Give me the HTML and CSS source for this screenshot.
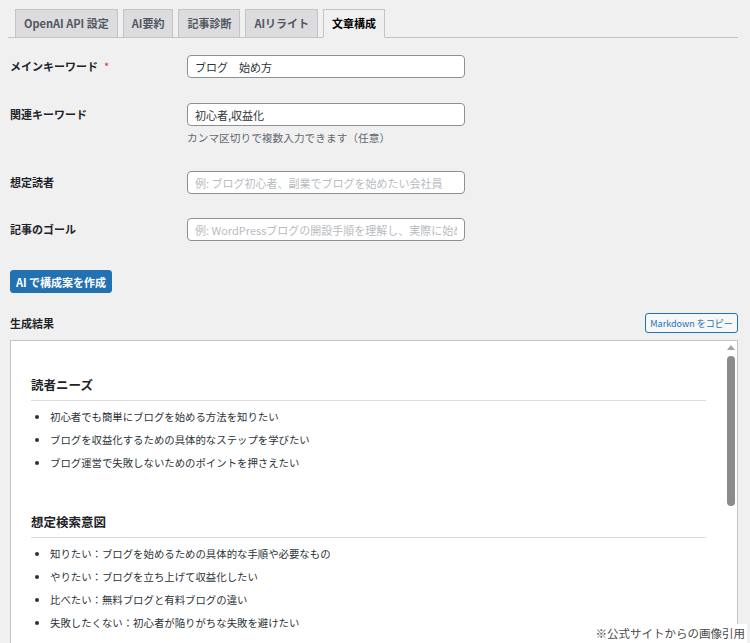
FILE: index.html
```html
<!DOCTYPE html>
<html lang="ja">
<head>
<meta charset="utf-8">
<title>文章構成</title>
<link rel="stylesheet" href="styles.css">
</head>
<body>
<div class="page">
  <nav class="tabs">
    <a class="tab">OpenAI API 設定</a>
    <a class="tab">AI要約</a>
    <a class="tab">記事診断</a>
    <a class="tab">AIリライト</a>
    <a class="tab active">文章構成</a>
  </nav>

  <form class="form">
    <div class="row row-first">
      <label class="label">メインキーワード<span class="req">*</span></label>
      <div class="field"><input class="input" type="text" value="ブログ　始め方"></div>
    </div>
    <div class="row">
      <label class="label">関連キーワード</label>
      <div class="field">
        <input class="input" type="text" value="初心者,収益化">
        <p class="desc">カンマ区切りで複数入力できます（任意）</p>
      </div>
    </div>
    <div class="row">
      <label class="label">想定読者</label>
      <div class="field"><input class="input" type="text" placeholder="例: ブログ初心者、副業でブログを始めたい会社員"></div>
    </div>
    <div class="row row-last">
      <label class="label">記事のゴール</label>
      <div class="field"><input class="input" type="text" placeholder="例: WordPressブログの開設手順を理解し、実際に始められる"></div>
    </div>
    <button class="primary" type="button">AI で構成案を作成</button>
  </form>

  <div class="result-head">
    <span class="result-title">生成結果</span>
    <button class="copy" type="button">Markdown をコピー</button>
  </div>

  <div class="result">
    <div class="content">
      <h3 class="sec">読者ニーズ</h3>
      <ul class="list">
        <li>初心者でも簡単にブログを始める方法を知りたい</li>
        <li>ブログを収益化するための具体的なステップを学びたい</li>
        <li>ブログ運営で失敗しないためのポイントを押さえたい</li>
      </ul>
      <h3 class="sec sec-next">想定検索意図</h3>
      <ul class="list">
        <li>知りたい：ブログを始めるための具体的な手順や必要なもの</li>
        <li>やりたい：ブログを立ち上げて収益化したい</li>
        <li>比べたい：無料ブログと有料ブログの違い</li>
        <li>失敗したくない：初心者が陥りがちな失敗を避けたい</li>
      </ul>
    </div>
    <div class="scroll-arrow"></div>
    <div class="scroll-thumb"></div>
  </div>

  <div class="caption">※公式サイトからの画像引用</div>
</div>
</body>
</html>
```

FILE: styles.css
```css
html, body {
  margin: 0;
  padding: 0;
  background: #f0f0f1;
}
body {
  font-family: "Noto Sans CJK JP", "Noto Sans", sans-serif;
  color: #1d2327;
}
.page {
  position: relative;
  height: 643px;
  overflow: hidden;
  padding: 9px 12px 0 8px;
  box-sizing: border-box;
}

/* tabs */
.tabs {
  display: flex;
  gap: 5px;
  padding-left: 7px;
  border-bottom: 1px solid #c3c4c7;
  height: 28px;
}
.tab {
  display: block;
  height: 28px;
  box-sizing: border-box;
  padding: 0 8px;
  border: 1px solid #c3c4c7;
  border-bottom: none;
  background: #dcdcde;
  color: #50575e;
  font-size: 11px;
  font-weight: 700;
  line-height: 27px;
  white-space: nowrap;
}
.tab.active {
  background: #f0f0f1;
  color: #000;
  height: 29px;
  border-bottom: 1px solid #f0f0f1;
}

/* form */
.form {
  padding-left: 2px;
}
.row {
  display: flex;
  align-items: flex-start;
  margin-top: 25px;
}
.row-first {
  margin-top: 17px;
}
.label {
  width: 177px;
  flex: none;
  font-size: 11px;
  font-weight: 700;
  line-height: 23px;
  color: #1d2327;
}
.req {
  color: #d63638;
  margin-left: 6px;
  font-weight: 400;
}
.field {
  width: 278px;
}
.input {
  display: block;
  width: 278px;
  height: 23px;
  box-sizing: border-box;
  margin: 0;
  padding: 0 7px;
  border: 1px solid #8c8f94;
  border-radius: 4px;
  background: #fff;
  font-family: inherit;
  font-size: 11px;
  color: #2c3338;
}
.input::placeholder {
  color: #b9bcbf;
}
.desc {
  margin: 4px 0 0;
  font-size: 10.7px;
  line-height: 16px;
  color: #646970;
}
.row-last {
  margin-top: 24px;
}
.primary {
  display: block;
  margin: 29px 0 0;
  width: 102px;
  height: 23px;
  padding: 0;
  border: 1px solid #2271b1;
  border-radius: 3px;
  background: #2271b1;
  color: #fff;
  font-family: inherit;
  font-size: 11px;
  font-weight: 700;
}

/* result header */
.result-head {
  display: flex;
  justify-content: space-between;
  align-items: center;
  margin: 20px 0 0 2px;
  height: 20px;
}
.result-title {
  font-size: 11px;
  font-weight: 700;
  color: #1d2327;
}
.copy {
  height: 20px;
  width: 93px;
  padding: 0;
  border: 1px solid #2271b1;
  border-radius: 3px;
  background: #f6f7f7;
  color: #2271b1;
  font-family: inherit;
  font-size: 9px;
  white-space: nowrap;
}

/* result box */
.result {
  position: relative;
  margin: 7px 0 0 2px;
  height: 320px;
  border: 1px solid #c3c4c7;
  background: #fff;
  overflow: hidden;
}
.content {
  padding: 35px 31px 0 20px;
}
.sec {
  margin: 0;
  padding-bottom: 6px;
  border-bottom: 1px solid #dcdcde;
  font-size: 12.5px;
  font-weight: 700;
  line-height: 18px;
  color: #1d2327;
}
.sec-next {
  margin-top: 42px;
}
.list {
  margin: 7.5px 0 0;
  padding-left: 19px;
  font-size: 10.4px;
  line-height: 16px;
  color: #2c3338;
}
.list li + li {
  margin-top: 7.3px;
}
.scroll-arrow {
  position: absolute;
  left: 716px;
  top: 4px;
  width: 0;
  height: 0;
  border-left: 4px solid transparent;
  border-right: 4px solid transparent;
  border-bottom: 5px solid #a3a3a3;
}
.scroll-thumb {
  position: absolute;
  left: 716px;
  top: 15px;
  width: 8px;
  height: 150px;
  border-radius: 4px;
  background: #8b8b8b;
}

.caption {
  position: absolute;
  right: 3px;
  top: 624px;
  padding: 1px 2px 1px 4px;
  background: #fff;
  font-size: 11.5px;
  line-height: 17px;
  color: #4a4a4a;
}
```
